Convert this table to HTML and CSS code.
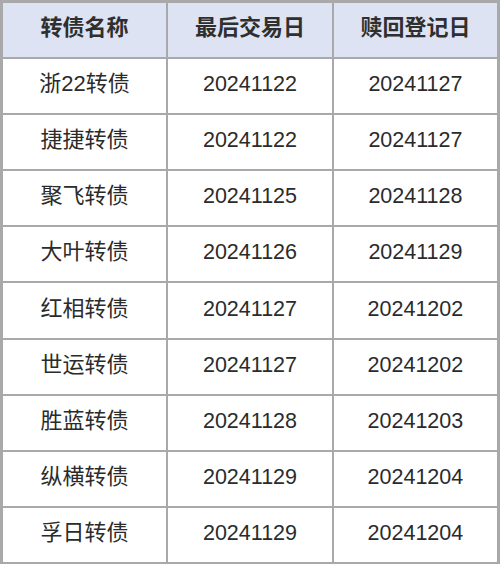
FILE: index.html
```html
<!DOCTYPE html>
<html lang="zh-CN">
<head>
<meta charset="utf-8">
<link rel="stylesheet" href="styles.css">
</head>
<body>
<table class="bonds">
  <thead>
    <tr><th>转债名称</th><th>最后交易日</th><th>赎回登记日</th></tr>
  </thead>
  <tbody>
    <tr><td>浙22转债</td><td>20241122</td><td>20241127</td></tr>
    <tr><td>捷捷转债</td><td>20241122</td><td>20241127</td></tr>
    <tr><td>聚飞转债</td><td>20241125</td><td>20241128</td></tr>
    <tr><td>大叶转债</td><td>20241126</td><td>20241129</td></tr>
    <tr><td>红相转债</td><td>20241127</td><td>20241202</td></tr>
    <tr><td>世运转债</td><td>20241127</td><td>20241202</td></tr>
    <tr><td>胜蓝转债</td><td>20241128</td><td>20241203</td></tr>
    <tr><td>纵横转债</td><td>20241129</td><td>20241204</td></tr>
    <tr><td>孚日转债</td><td>20241129</td><td>20241204</td></tr>
  </tbody>
</table>
</body>
</html>
```
FILE: styles.css
```css
html, body {
  margin: 0;
  padding: 0;
  background: #ffffff;
}
.bonds {
  width: 500px;
  border-collapse: collapse;
  table-layout: fixed;
  border: 3px solid #a9a9a9;
  font-family: "Liberation Sans", "Noto Sans CJK SC", sans-serif;
  color: #2b2b2b;
}
.bonds tr {
  height: 56.2px;
}
.bonds th,
.bonds td {
  border: 2px solid #a9a9a9;
  text-align: center;
  vertical-align: middle;
  padding: 0 0 4px 0;
  line-height: 24px;
  font-size: 21.5px;
}
.bonds th {
  background: #dde3f2;
  font-weight: bold;
  font-size: 22px;
  color: #2f2f2f;
}
.bonds td:first-child {
  font-size: 22px;
}
```
